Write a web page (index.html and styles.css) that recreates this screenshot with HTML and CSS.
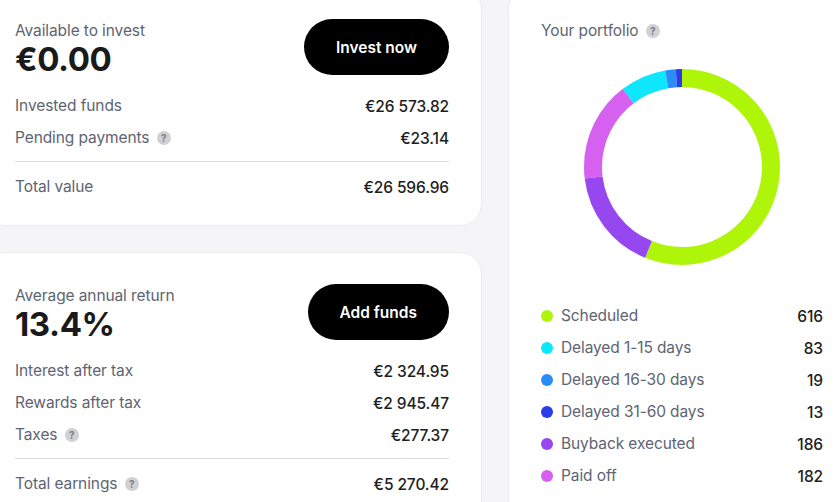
FILE: index.html
```html
<!DOCTYPE html>
<html lang="en">
<head>
    <meta charset="UTF-8">
    <meta name="viewport" content="width=device-width, initial-scale=1.0">
    <title>Portfolio overview</title>
    <link rel="stylesheet" href="styles.css">
</head>
<body>
    <div class="dashboard">
        <div class="left-column">
            <section class="card summary-card">
                <div class="summary-head">
                    <div class="summary-title">
                        <div class="label">Available to invest</div>
                        <div class="big-number">€0.00</div>
                    </div>
                    <button class="pill-button">Invest now</button>
                </div>
                <div class="row"><span class="label">Invested funds</span><span class="value">€26 573.82</span></div>
                <div class="row"><span class="label">Pending payments <span class="hint">?</span></span><span class="value">€23.14</span></div>
                <hr class="divider">
                <div class="row"><span class="label">Total value</span><span class="value">€26 596.96</span></div>
            </section>

            <section class="card summary-card">
                <div class="summary-head">
                    <div class="summary-title">
                        <div class="label">Average annual return</div>
                        <div class="big-number">13.4%</div>
                    </div>
                    <button class="pill-button">Add funds</button>
                </div>
                <div class="row"><span class="label">Interest after tax</span><span class="value">€2 324.95</span></div>
                <div class="row"><span class="label">Rewards after tax</span><span class="value">€2 945.47</span></div>
                <div class="row"><span class="label">Taxes <span class="hint">?</span></span><span class="value">€277.37</span></div>
                <hr class="divider">
                <div class="row"><span class="label">Total earnings <span class="hint">?</span></span><span class="value">€5 270.42</span></div>
            </section>
        </div>

        <section class="card portfolio-card">
            <div class="label">Your portfolio <span class="hint">?</span></div>

            <div class="donut">
                <svg width="196" height="196" viewBox="0 0 196 196">
                    <g transform="rotate(-90 98 98)" fill="none" stroke-width="18">
                        <circle cx="98" cy="98" r="89" stroke="#aef50a" stroke-dasharray="313.44 559.2" stroke-dashoffset="0"></circle>
                        <circle cx="98" cy="98" r="89" stroke="#9747f0" stroke-dasharray="94.64 559.2" stroke-dashoffset="-313.44"></circle>
                        <circle cx="98" cy="98" r="89" stroke="#d660f0" stroke-dasharray="92.61 559.2" stroke-dashoffset="-408.08"></circle>
                        <circle cx="98" cy="98" r="89" stroke="#0ee6fb" stroke-dasharray="42.23 559.2" stroke-dashoffset="-500.69"></circle>
                        <circle cx="98" cy="98" r="89" stroke="#2a8df5" stroke-dasharray="9.67 559.2" stroke-dashoffset="-542.92"></circle>
                        <circle cx="98" cy="98" r="89" stroke="#2a3bea" stroke-dasharray="6.61 559.2" stroke-dashoffset="-552.59"></circle>
                    </g>
                </svg>
            </div>

            <ul class="legend">
                <li><span class="dot dot-scheduled"></span><span class="label">Scheduled</span><span class="value">616</span></li>
                <li><span class="dot dot-late-1"></span><span class="label">Delayed 1-15 days</span><span class="value">83</span></li>
                <li><span class="dot dot-late-2"></span><span class="label">Delayed 16-30 days</span><span class="value">19</span></li>
                <li><span class="dot dot-late-3"></span><span class="label">Delayed 31-60 days</span><span class="value">13</span></li>
                <li><span class="dot dot-buyback"></span><span class="label">Buyback executed</span><span class="value">186</span></li>
                <li><span class="dot dot-paid"></span><span class="label">Paid off</span><span class="value">182</span></li>
            </ul>
        </section>
    </div>
</body>
</html>
```

FILE: styles.css
```css
:root {
    --page-background: #f5f5f7;
    --card-background: #ffffff;
    --card-border: #ebebef;
    --label-color: #5e6471;
    --value-color: #1d1d21;
    --hint-color: #d0d1d5;
}

* {
    box-sizing: border-box;
    margin: 0;
    padding: 0;
}

body {
    font-family: 'Inter', 'Noto Sans', sans-serif;
    background-color: var(--page-background);
    color: var(--value-color);
    overflow: hidden;
}

.dashboard {
    display: flex;
    align-items: flex-start;
    gap: 26px;
    margin: -13px 0 0 -17px;
}

.left-column {
    flex-shrink: 0;
    width: 499px;
    display: flex;
    flex-direction: column;
    gap: 26px;
}

.card {
    background-color: var(--card-background);
    border: 1px solid var(--card-border);
    border-radius: 22px;
}

.summary-card {
    padding: 31px 32px 26px 31px;
}

.summary-head {
    display: flex;
    justify-content: space-between;
    align-items: flex-start;
    margin-bottom: 17px;
}

.summary-title {
    padding-top: 1px;
}

.summary-title .label {
    line-height: 22px;
}

.label {
    font-size: 15.5px;
    line-height: 24px;
    color: var(--label-color);
    letter-spacing: -0.1px;
}

.big-number {
    font-size: 33px;
    font-weight: 700;
    line-height: 35px;
    letter-spacing: -0.4px;
    color: #1a1a1c;
}

.pill-button {
    height: 56px;
    padding: 0 32px;
    border: none;
    border-radius: 28px;
    background-color: #000;
    color: #fff;
    font-family: inherit;
    font-size: 15.5px;
    font-weight: 600;
    cursor: pointer;
}

.row {
    display: flex;
    justify-content: space-between;
    align-items: center;
    height: 24px;
    margin-bottom: 8px;
}

.row:last-child {
    margin-bottom: 0;
}

.value {
    font-size: 15.5px;
    font-weight: 500;
    color: var(--value-color);
    letter-spacing: -0.1px;
}

.hint {
    display: inline-flex;
    align-items: center;
    justify-content: center;
    width: 14px;
    height: 14px;
    margin-left: 3px;
    border-radius: 50%;
    background-color: var(--hint-color);
    color: #7b7e86;
    font-size: 10px;
    font-weight: 700;
    line-height: 1;
    vertical-align: 1px;
}

.divider {
    border: none;
    border-top: 1px solid #d9dadf;
    margin: 11px 0 13px;
}

.portfolio-card {
    flex-shrink: 0;
    width: 348px;
    padding: 31px 32px 40px;
}

.donut {
    display: flex;
    justify-content: center;
    margin: 26px 0 39px;
}

.legend {
    list-style: none;
}

.legend li {
    display: flex;
    align-items: center;
    height: 24px;
    margin-bottom: 8px;
}

.legend .label {
    flex: 1;
}

.dot {
    width: 12px;
    height: 12px;
    border-radius: 50%;
    margin: 0 8px 0 0;
}

.dot-scheduled { background-color: #aef50a; }
.dot-late-1 { background-color: #0ee6fb; }
.dot-late-2 { background-color: #2a8df5; }
.dot-late-3 { background-color: #2a3bea; }
.dot-buyback { background-color: #9747f0; }
.dot-paid { background-color: #d660f0; }
```
